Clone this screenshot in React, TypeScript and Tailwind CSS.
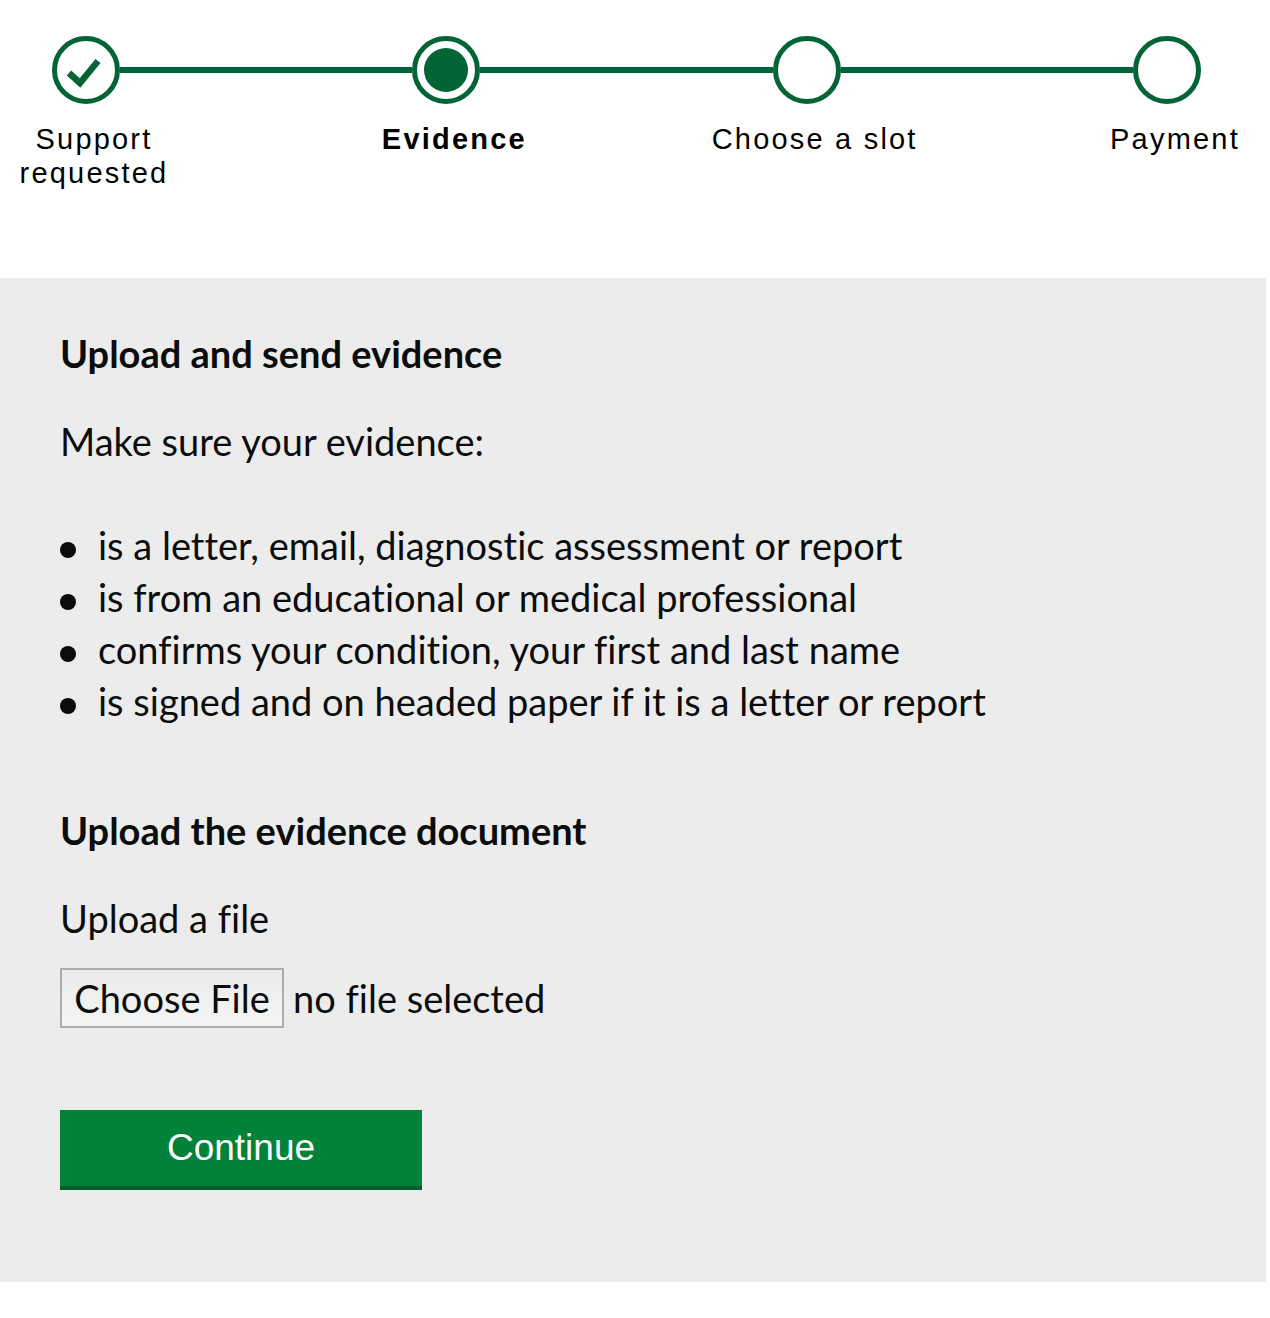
import { Fragment } from "react"

type StepState = "done" | "current" | "todo"

const steps: { lines: string[]; state: StepState }[] = [
    { lines: ["Support", "requested"], state: "done" },
    { lines: ["Evidence"], state: "current" },
    { lines: ["Choose a slot"], state: "todo" },
    { lines: ["Payment"], state: "todo" },
]

const requirements = [
    "is a letter, email, diagnostic assessment or report",
    "is from an educational or medical professional",
    "confirms your condition, your first and last name",
    "is signed and on headed paper if it is a letter or report",
]

function StepCircle({ state }: { state: StepState }) {
    if (state === "current") {
        return (
            <div className="flex size-[68px] shrink-0 items-center justify-center rounded-full border-[5px] border-[#006435] bg-white">
                <div className="size-[44px] rounded-full bg-[#006435]" />
            </div>
        )
    }
    return (
        <div className="flex size-[68px] shrink-0 items-center justify-center rounded-full border-[5px] border-[#006435] bg-white">
            {state === "done" && (
                <svg viewBox="0 0 58 58" className="size-[58px]" fill="none">
                    <polyline points="12,32 23,42 41,20" stroke="#006435" strokeWidth="6.5" strokeLinecap="butt" strokeLinejoin="miter" />
                </svg>
            )}
        </div>
    )
}

export default function App() {
    return (
        <div className="min-h-[1318px] bg-white font-['Lato',sans-serif] text-[#0b0c0c] [font-variant-ligatures:none]">
            {/* progress steps */}
            <div className="pt-[36px] pb-[88px]">
                <div className="ml-[52px] flex w-[1149px] items-center">
                    {steps.map((step, i) => (
                        <Fragment key={step.lines.join(" ")}>
                            <StepCircle state={step.state} />
                            {i < steps.length - 1 && <div className="h-[6px] flex-1 bg-[#006435]" />}
                        </Fragment>
                    ))}
                </div>
                <div className="mt-[18px] ml-[60px] flex w-[1149px] justify-between font-['Liberation_Sans',Arial,sans-serif] text-[29px] leading-[34px] tracking-[2.2px] text-black">
                    {steps.map((step) => (
                        <div key={step.lines.join(" ")} className="flex w-[68px] justify-center">
                            <div className={`whitespace-nowrap text-center ${step.state === "current" ? "font-bold" : ""}`}>
                                {step.lines.map((line) => (
                                    <div key={line}>{line}</div>
                                ))}
                            </div>
                        </div>
                    ))}
                </div>
            </div>

            {/* evidence panel */}
            <div className="w-[1266px] bg-[#ececec] px-[60px] pt-[49px] pb-[92px] text-[38px] leading-[52px]">
                <h1 className="font-bold">Upload and send evidence</h1>
                <p className="mt-[36px]">Make sure your evidence:</p>
                <ul className="mt-[52px]">
                    {requirements.map((item) => (
                        <li key={item} className="flex items-start">
                            <span className="mt-[23px] mr-[22px] size-[16px] shrink-0 rounded-full bg-[#0b0c0c]" />
                            <span>{item}</span>
                        </li>
                    ))}
                </ul>

                <h2 className="mt-[77px] font-bold">Upload the evidence document</h2>
                <label htmlFor="evidence-file" className="mt-[36px] block">Upload a file</label>
                <div className="mt-[24px] flex items-center">
                    <label htmlFor="evidence-file" className="flex h-[60px] w-[224px] items-center justify-center border-2 border-[#adadad] bg-gradient-to-b from-[#ebebeb] to-[#f5f5f5]">
                        Choose File
                    </label>
                    <span className="ml-[9px]">no file selected</span>
                    <input id="evidence-file" type="file" className="hidden" />
                </div>

                <button className="mt-[82px] flex h-[80px] w-[362px] items-center justify-center border-b-4 border-[#00612e] bg-[#00823b] font-['Liberation_Sans',Arial,sans-serif] text-[37px] text-white">
                    Continue
                </button>
            </div>
        </div>
    )
}
